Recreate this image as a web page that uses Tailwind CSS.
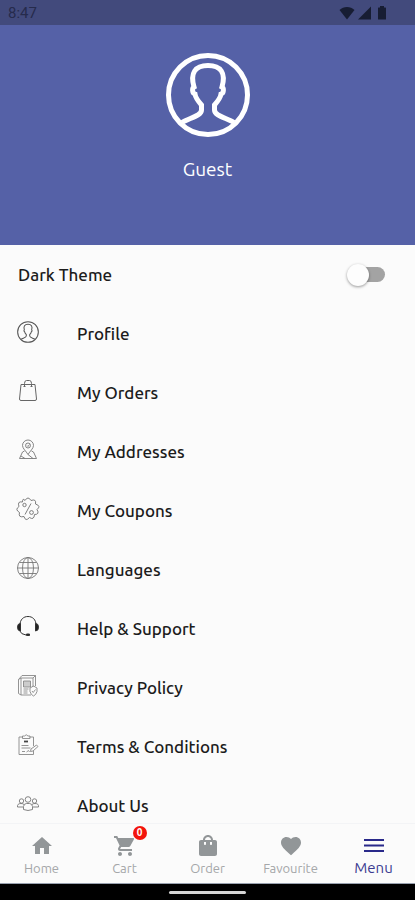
<!DOCTYPE html>
<html lang="en">
<head>
  <meta charset="UTF-8" />
  <meta name="viewport" content="width=device-width, initial-scale=1.0"/>
  <title>Menu</title>
  <script src="https://cdn.jsdelivr.net/npm/@tailwindcss/browser@4"></script>
</head>
<body class="h-screen flex flex-col overflow-hidden bg-[#fbfbfb] text-[#1c1c1c] font-['Ubuntu','Noto_Sans',sans-serif]">

  <!-- Shared icon shapes -->
  <svg class="hidden" aria-hidden="true">
    <symbol id="user-circle" viewBox="0 0 84 84">
      <circle cx="42" cy="42" r="39.5"/>
      <path d="M16 69.500C23 65 35.500 63 35.500 57V52C32 48 29.500 45 29 41C26 40 26 35 28 34C24 20 29 12.500 42 12.500C55 12.500 60 20 56 34C58 35 58 40 55 41C54.500 45 52 48 48.500 52V57C48.500 63 61 65 68 69.500"/>
    </symbol>
  </svg>

  <!-- Status Bar -->
  <div class="h-[25px] shrink-0 flex items-center justify-between pl-2 pr-[26px] pt-px bg-[#424a7c] text-[#262b4c]">
    <span class="text-[15px] font-['Roboto',sans-serif]">8:47</span>
    <div class="flex items-center gap-[3px]">
      <svg class="w-4 h-3.5" viewBox="0 0 16 14" fill="#171d33"><path d="M8 13.500L.5 4C4.500 0 11.500 0 15.500 4z"/></svg>
      <svg class="w-3.5 h-3.5" viewBox="0 0 14 14" fill="#171d33"><path d="M13 .5v13H0z"/></svg>
      <svg class="w-3.5 h-3.5" viewBox="0 0 14 14" fill="#171d33"><path d="M5 0h4v1.500h1.500q.5 0 .5.500v11q0 .5-.5.500h-7q-.5 0-.5-.5V2q0-.5.5-.5H5z"/></svg>
    </div>
  </div>

  <!-- Profile Header -->
  <header class="h-[220px] shrink-0 flex flex-col items-center pt-7 bg-[#5561a7] text-white">
    <svg class="size-[84px] fill-none stroke-current stroke-[5]" aria-hidden="true"><use href="#user-circle"/></svg>
    <h1 class="mt-[18px] text-[19px] leading-7">Guest</h1>
  </header>

  <main class="flex-1 min-h-0 overflow-y-auto [scrollbar-width:none] text-[17px] font-medium">
    <label class="h-[59px] flex items-center justify-between pl-[18px] pr-[30px]">
      Dark Theme
      <span class="relative w-[38px] h-[22px] flex items-center">
        <input id="dark-theme" type="checkbox" role="switch" class="peer appearance-none w-full h-[15px] ml-1 rounded-full bg-[#a3a3a3] checked:bg-[#5561a7]/60" />
        <span class="absolute left-0 top-0 size-[22px] rounded-full bg-[#fdfdfd] shadow-[0_1px_3px_rgba(0,0,0,0.4)] peer-checked:left-4"></span>
      </span>
    </label>

    <!-- Menu List -->
    <nav aria-label="Account">
      <a href="#profile" class="h-[59px] flex items-center gap-[37px] pl-4">
        <svg class="size-6 p-px mb-1 fill-none stroke-[#555] stroke-[4]" aria-hidden="true"><use href="#user-circle"/></svg>
        Profile
      </a>
      <a href="#orders" class="h-[59px] flex items-center gap-[37px] pl-4">
        <svg class="size-6 mb-1" viewBox="0 0 24 24" fill="none" stroke="#666"><path d="M5 5.500h14L20.500 20q0 1.500-1.500 1.500H5Q3.500 21.500 3.500 20zM8.500 8V4.500Q8.500 1.500 10.500 1.500h3Q15.500 1.500 15.500 4.500V8M7.500 7.500h2M14.500 7.500h2"/></svg>
        My Orders
      </a>
      <a href="#addresses" class="h-[59px] flex items-center gap-[37px] pl-4">
        <svg class="size-6 mb-1" viewBox="0 0 24 24" fill="none" stroke="#777" stroke-width=".9"><path d="M12 16.500C10 13 6.500 10.500 6.500 7.500a5.500 5.500 0 0 1 11 0C17.500 10.500 14 13 12 16.500zM8.500 13L6.500 14 3.500 20.500h17L17.500 14 15.500 13M5 18l4 2.500M12 16.500l5 4"/><circle cx="12" cy="7.500" r="2.500"/><path d="M11 7.500l1 1 1.500-2"/></svg>
        My Addresses
      </a>
      <a href="#coupons" class="h-[59px] flex items-center gap-[37px] pl-4">
        <svg class="size-6 mb-1" viewBox="0 0 24 24" fill="none" stroke="#707070" stroke-width=".9"><path d="M9 3.500Q12-1.500 15 3.500Q20.500 1.500 19.500 7Q25.500 9 21 12.500Q24 17.500 18.500 17.500Q18 23.500 13.500 20.500Q9.500 25 8 19.500Q2 21 3.500 15.500Q-1.500 12.500 3 9.500Q1 4 6.500 5Q6.500.5 9 3.500zM15 6.500L9 17.500"/><circle cx="8.500" cy="8" r="1.700"/><circle cx="15.500" cy="15.500" r="1.900"/></svg>
        My Coupons
      </a>
      <a href="#languages" class="h-[59px] flex items-center gap-[37px] pl-4">
        <svg class="size-6 mb-1" viewBox="0 0 24 24" fill="none" stroke="#777" stroke-width=".9"><circle cx="12" cy="12" r="10.500"/><ellipse cx="12" cy="12" rx="5.500" ry="10.500"/><path d="M12 1.500v21M1.500 12h21M3.500 6.500h17M3.500 17.500h17"/></svg>
        Languages
      </a>
      <a href="#help" class="h-[59px] flex items-center gap-[37px] pl-4">
        <svg class="size-6 mb-1" viewBox="0 0 24 24" fill="none" stroke="#333"><path d="M4 10C4 4.500 7.500 1.500 12 1.500S20 4.500 20 10M3.500 15.500Q5 19.500 10 20"/><path d="M4.500 8.500v7.500Q1.500 16 1.500 12.200T4.500 8.500zM19.500 8.500v7.500Q22.500 16 22.500 12.200T19.500 8.500zM10.500 19h3v1.500h-3z" fill="#222"/></svg>
        Help &amp; Support
      </a>
      <a href="#privacy" class="h-[59px] flex items-center gap-[37px] pl-4">
        <svg class="size-6 mb-1" viewBox="0 0 24 24" fill="none" stroke="#888" stroke-width=".9"><path d="M5 4V21h10M5 4L2.500 5.500V19.500L5 21M5 4h12v9M2.500 5.500L6 1.500h13.500V12M17 4l2.500-2.500"/><path d="M7.500 7h7v6h-7zM7.500 15h5M7.500 17h4M7.500 19h4" fill="#ccc"/><path d="M17.500 12L21 14v3.500Q20 21 17.500 22Q15 21 14 17.500V14zM16 17l1.200 1.500L19.500 15.500"/></svg>
        Privacy Policy
      </a>
      <a href="#terms" class="h-[59px] flex items-center gap-[37px] pl-4">
        <svg class="size-6 mb-1" viewBox="0 0 24 24" fill="none" stroke="#888" stroke-width=".9"><path d="M7 4H3V21.500H17.500V18M13.500 4h4v9M6.500 5.500V3h2Q10.200.5 12 3h2v2.500zM5.500 12.500h7M5.500 15h9M6 18.500h3M10.500 19l2-1.500 1 1.500"/><path d="M8 8.500h4" stroke="#444" stroke-width="1.800"/><path d="M14.500 18.500l.5-2.500 5.500-4 1.500 1.500-5 4.500z"/></svg>
        Terms &amp; Conditions
      </a>
      <a href="#about" class="h-[59px] flex items-center gap-[37px] pl-4">
        <svg class="size-6 mb-1" viewBox="0 0 24 24" fill="none" stroke="#777" stroke-width=".9"><circle cx="12" cy="7.500" r="2.800"/><circle cx="5.500" cy="9" r="2.200"/><circle cx="18.500" cy="9" r="2.200"/><path d="M7.500 17.500v-3Q8 11.500 10.500 11.500h3Q16 11.500 16.500 14.500v3Q12 19.500 7.500 17.500zM7 15H1.500Q1 11.500 5 11.500q2 0 3 1M17 15h5.500Q23 11.500 19 11.500q-2 0-3 1"/></svg>
        About Us
      </a>
    </nav>
  </main>

  <!-- Bottom Navigation -->
  <nav aria-label="Main" class="h-[61px] shrink-0 grid grid-cols-5 border-t border-gray-100 border-b border-b-gray-400 text-[13px] text-[#a5a7a9]">
    <a href="#home" class="flex flex-col items-center pt-2.5">
      <svg class="size-6" viewBox="0 0 24 24" fill="#929698"><path d="M10 20v-6h4v6h5v-8h3L12 3 2 12h3v8z"/></svg>
      <span class="leading-5">Home</span>
    </a>
    <a href="#cart" class="flex flex-col items-center pt-2.5">
      <span class="relative">
        <svg class="size-6" viewBox="0 0 24 24" fill="#929698"><path d="M7 18c-1.100 0-1.990.9-1.990 2S5.900 22 7 22s2-.9 2-2-.9-2-2-2zM1 2v2h2l3.600 7.590-1.350 2.450c-.16.280-.25.610-.25.960 0 1.100.9 2 2 2h12v-2H7.420c-.14 0-.25-.11-.25-.25l.03-.12.900-1.630h7.450c.75 0 1.410-.41 1.750-1.030l3.580-6.490A1 1 0 0 0 20 4H5.210l-.94-2H1zm16 16c-1.100 0-1.990.9-1.990 2s.89 2 1.990 2 2-.9 2-2-.9-2-2-2z"/></svg>
        <span class="absolute -top-2 left-5 size-[14px] rounded-full bg-[#f3140c] text-white text-[10px] leading-[14px] font-bold text-center">0</span>
      </span>
      <span class="leading-5">Cart</span>
    </a>
    <a href="#order" class="flex flex-col items-center pt-2.5">
      <svg class="size-6" viewBox="0 0 24 24" fill="#929698"><path d="M19 6h-2c0-2.760-2.240-5-5-5S7 3.240 7 6H5c-1.100 0-2 .9-2 2v12c0 1.100.9 2 2 2h14c1.100 0 2-.9 2-2V8c0-1.100-.9-2-2-2zm-9 4c0 .55-.45 1-1 1s-1-.45-1-1V8h2v2zm2-7c1.660 0 3 1.340 3 3H9c0-1.660 1.340-3 3-3zm4 7c0 .55-.45 1-1 1s-1-.45-1-1V8h2v2z"/></svg>
      <span class="leading-5">Order</span>
    </a>
    <a href="#favourite" class="flex flex-col items-center pt-2.5">
      <svg class="size-6" viewBox="0 0 24 24" fill="#929698"><path d="M12 21.350l-1.450-1.320C5.400 15.360 2 12.280 2 8.500 2 5.420 4.420 3 7.500 3c1.740 0 3.410.81 4.500 2.090C13.090 3.810 14.760 3 16.500 3 19.580 3 22 5.420 22 8.500c0 3.780-3.400 6.860-8.550 11.540L12 21.350z"/></svg>
      <span class="leading-5">Favourite</span>
    </a>
    <a href="#menu" aria-current="page" class="flex flex-col items-center pt-2.5 text-[15px] text-[#3b3b91]">
      <svg class="size-6" viewBox="0 0 24 24" fill="#29298a"><path d="M2 5h20v2H2zM2 10.500h20v2H2zM2 16h20v2H2z"/></svg>
      <span class="leading-5">Menu</span>
    </a>
  </nav>

  <!-- Gesture Bar -->
  <div class="h-4 shrink-0 flex items-center justify-center bg-black">
    <div class="w-[77px] h-[3px] rounded-full bg-[#d5d5d5]"></div>
  </div>

</body>
</html>
